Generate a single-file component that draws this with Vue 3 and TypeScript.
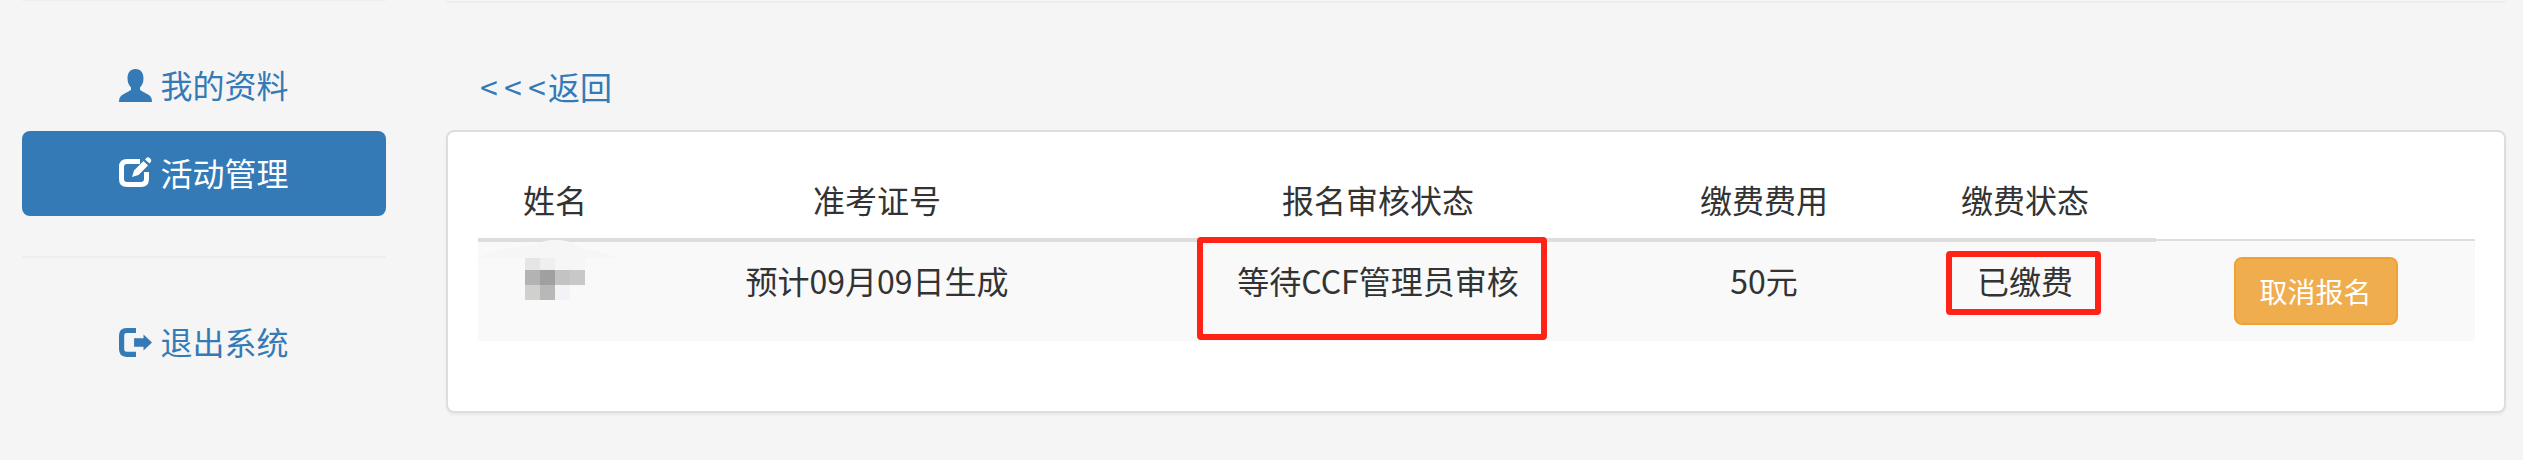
<script setup lang="ts">
interface Col { key: string; label: string }
const columns: Col[] = [
  { key: 'name', label: '姓名' },
  { key: 'ticket', label: '准考证号' },
  { key: 'review', label: '报名审核状态' },
  { key: 'fee', label: '缴费费用' },
  { key: 'paid', label: '缴费状态' },
  { key: 'action', label: '' },
]
const mosaic: string[] = [
  '#e5e5e5', '#efefef', '#f6f6f6', '#f6f6f6',
  '#b3b3b3', '#a0a0a0', '#c3c3c3', '#c8c8c8',
  '#d0d0cf', '#b8b8b8', '#f1f3f7', '#f9f9f9',
]
</script>

<template>
  <div class="page">
    <aside class="sidebar">
      <div class="rule"></div>
      <a class="nav-item first">
        <svg class="icon" width="33" height="33" viewBox="0 0 33 33">
          <path fill="currentColor" d="M16.5 0C11 0 8.5 4 8.5 9.5C8.5 13.5 10 16.5 12 18.5V20.5C12 21.5 6 24 2.5 26.5C.8 27.8 0 30 0 33H33C33 30 32.2 27.8 30.5 26.5C27 24 21 21.5 21 20.5V18.5C23 16.5 24.5 13.5 24.5 9.5C24.5 4 22 0 16.5 0Z" />
        </svg>
        <span>我的资料</span>
      </a>
      <a class="nav-item active">
        <svg class="icon" width="33" height="33" viewBox="0 0 33 33">
          <path fill="none" stroke="currentColor" stroke-width="5" d="M21 4.5H8Q2.5 4.5 2.5 10V22Q2.5 27.5 8 27.5H22Q27.5 27.5 27.5 22V15" />
          <path fill="currentColor" d="M13 20L15 13.5L24.5 4L29 8.5L19.5 18Z" />
          <path fill="currentColor" d="M26 2.5L28 .5Q29 0 30 .5L32 2.5Q32.5 3.5 32 4.5L30.5 6.5Z" />
        </svg>
        <span>活动管理</span>
      </a>
      <div class="divider"></div>
      <a class="nav-item">
        <svg class="icon" width="33" height="31" viewBox="0 0 35 31">
          <path fill="none" stroke="currentColor" stroke-width="5.5" d="M18 2.75H8Q2.75 2.75 2.75 8V22.5Q2.75 28 8 28H18" />
          <path fill="currentColor" d="M16 11H26V7L35 15.5L26 24V20H16Z" />
        </svg>
        <span>退出系统</span>
      </a>
    </aside>

    <main class="content">
      <div class="rule thick"></div>
      <a class="back"><span class="chevrons">&lt;&lt;&lt;</span>返回</a>
      <section class="card">
        <table class="table">
          <thead>
            <tr>
              <th v-for="c in columns" :key="c.key" :class="['col-' + c.key, { empty: !c.label }]">{{ c.label }}</th>
            </tr>
          </thead>
          <tbody>
            <tr>
              <td class="cell-name">
                <svg class="smear" width="140" height="20" viewBox="0 0 140 20">
                  <path fill="#f6f6f6" d="M0 18C12 10 35 8 55 5C62 2 68 0 78 0C88 0 96 2 102 8C115 10 130 13 138 18Z" />
                </svg>
                <div class="mosaic">
                  <i v-for="(m, i) in mosaic" :key="i" :style="{ background: m }"></i>
                </div>
              </td>
              <td>预计09月09日生成</td>
              <td class="mark-host">等待CCF管理员审核<span class="mark mark-review"></span></td>
              <td>50元</td>
              <td class="mark-host">已缴费<span class="mark mark-paid"></span></td>
              <td class="cell-action"><button class="btn" type="button">取消报名</button></td>
            </tr>
          </tbody>
        </table>
      </section>
    </main>
  </div>
</template>

<style>
html, body { margin: 0; background: #f5f5f5; }
</style>

<style scoped>
.page {
  display: flex;
  gap: 60px;
  height: 460px;
  padding-left: 22px;
  box-sizing: border-box;
  background: #f5f5f5;
  overflow: hidden;
  font-family: "Noto Sans CJK SC", "Noto Sans", sans-serif;
  font-size: 32px;
  color: #333;
}
.sidebar { width: 364px; flex: none; display: flex; flex-direction: column; }
.rule { height: 1px; background: #eee; flex: none; }
.rule.thick { height: 2px; margin-top: 1px; }
.nav-item {
  height: 85px;
  display: flex;
  align-items: center;
  justify-content: center;
  gap: 8px;
  color: #337ab7;
  border-radius: 8px;
  flex: none;
}
.nav-item.first { margin-top: 42px; margin-bottom: 3px; }
.nav-item.active { background: #337ab7; color: #fff; }
.nav-item span { position: relative; top: -2px; }
.icon { flex: none; }
.divider { height: 2px; background: #eee; margin: 40px 0 42px; flex: none; }

.content { width: 2060px; flex: none; display: flex; flex-direction: column; }
.back { color: #337ab7; margin: 60px 0 21px 34px; line-height: 46px; height: 46px; display: block; }
.chevrons { letter-spacing: 6.2px; margin-right: -4px; }

.card {
  background: #fff;
  border: 2px solid #ddd;
  border-radius: 8px;
  box-shadow: 0 2px 3px rgba(0, 0, 0, 0.05);
  padding: 28px 29px 70px 30px;
  box-sizing: border-box;
  height: 283px;
}
.table {
  width: 1997px;
  table-layout: fixed;
  border-collapse: collapse;
  font-size: 32px;
}
th, td { box-sizing: border-box; }
.col-name { width: 154px; }
.col-ticket { width: 490px; }
.col-review { width: 512px; }
.col-fee { width: 260px; }
.col-paid { width: 262px; }
.col-action { width: 319px; }
th {
  font-weight: 400;
  text-align: center;
  line-height: 46px;
  padding: 16px;
  border-bottom: 4px solid #ddd;
}
th.empty { border-bottom: 0; }
td {
  text-align: center;
  vertical-align: top;
  line-height: 46px;
  padding: 15px 16px 16px;
  border-top: 2px solid #ddd;
}
.cell-action { padding-top: 16px; }
tbody tr { background: #f9f9f9; }
.cell-name { position: relative; padding: 13px 0 0; }
.smear { position: absolute; left: 0; top: -2px; }
.mosaic {
  display: grid;
  grid-template-columns: repeat(4, 15px);
  grid-auto-rows: 15px;
  width: 60px;
  margin-left: 47px;
}
.mosaic i { display: block; }
.mark-host { position: relative; }
.mark {
  position: absolute;
  box-sizing: border-box;
  border: 6px solid #ff2216;
  border-radius: 4px;
}
.mark-review { left: 75px; top: -5px; width: 350px; height: 103px; }
.mark-paid { left: 52px; top: 9px; width: 155px; height: 64px; }
.btn {
  width: 164px;
  height: 68px;
  background: #f0ad4e;
  border: 2px solid #eea236;
  border-radius: 8px;
  color: #fff;
  font: inherit;
  font-size: 28px;
  line-height: 40px;
  padding: 0;
  display: inline-block;
  vertical-align: top;
}
</style>
